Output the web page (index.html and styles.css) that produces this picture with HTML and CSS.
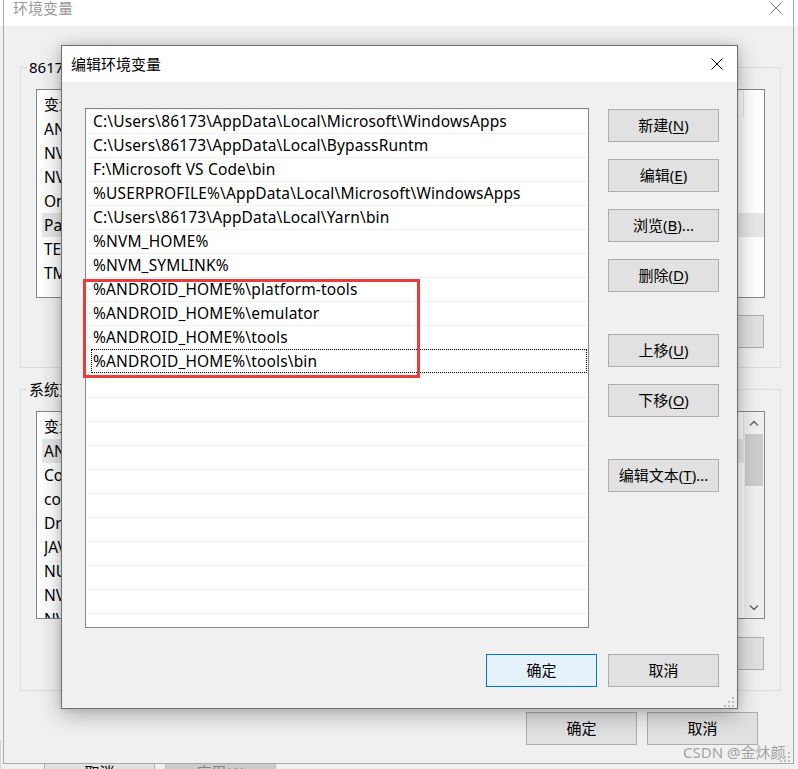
FILE: index.html
```html
<!DOCTYPE html>
<html lang="zh-CN">
<head>
<meta charset="utf-8">
<title>编辑环境变量</title>
<link rel="stylesheet" href="styles.css">
</head>
<body>
<div class="back-window">
  <div class="back-buttons">
    <span class="btn">取消</span>
    <span class="btn disabled">应用(A)</span>
  </div>
</div>

<section class="win env">
  <header class="win-title">
    <span class="win-caption">环境变量</span>
    <span class="win-close"><svg width="12" height="12" viewBox="0 0 12 12"><path d="M0.5 0.5L11.5 11.5M11.5 0.5L0.5 11.5" stroke="#777" stroke-width="1" fill="none"/></svg></span>
  </header>
  <div class="env-body">
    <div class="group">
      <span class="group-label">86173 的用户变量(<u>U</u>)</span>
      <div class="vlist v-user">
        <div class="vl-rows">
          <div class="vhead"><span class="c1">变量</span><span class="c2">值</span></div>
          <div class="vrow"><span class="c1">ANDROID_HOME</span><span class="c2">D:\Android\Sdk</span></div>
          <div class="vrow"><span class="c1">NVM_HOME</span><span class="c2">D:\nvm</span></div>
          <div class="vrow"><span class="c1">NVM_SYMLINK</span><span class="c2">D:\nodejs</span></div>
          <div class="vrow"><span class="c1">OneDrive</span><span class="c2">C:\Users\86173\OneDrive</span></div>
          <div class="vrow sel"><span class="c1">Path</span><span class="c2">C:\Users\86173\AppData\Local\Microsoft\WindowsApps;...</span></div>
          <div class="vrow"><span class="c1">TEMP</span><span class="c2">%USERPROFILE%\AppData\Local\Temp</span></div>
          <div class="vrow"><span class="c1">TMP</span><span class="c2">%USERPROFILE%\AppData\Local\Temp</span></div>
        </div>
      </div>
      <div class="group-btns">
        <span class="btn">新建(<u>N</u>)...</span>
        <span class="btn">编辑(<u>E</u>)...</span>
        <span class="btn">删除(<u>D</u>)</span>
      </div>
    </div>

    <div class="group group-sys">
      <span class="group-label">系统变量(<u>S</u>)</span>
      <div class="vlist v-sys">
        <div class="vl-rows">
          <div class="vhead"><span class="c1">变量</span><span class="c2">值</span></div>
          <div class="vrow sel"><span class="c1">ANDROID_HOME</span><span class="c2">D:\Android\Sdk</span></div>
          <div class="vrow"><span class="c1">ComSpec</span><span class="c2">C:\Windows\system32\cmd.exe</span></div>
          <div class="vrow"><span class="c1">configsetroot</span><span class="c2">C:\Windows\ConfigSetRoot</span></div>
          <div class="vrow"><span class="c1">DriverData</span><span class="c2">C:\Windows\System32\Drivers\DriverData</span></div>
          <div class="vrow"><span class="c1">JAVA_HOME</span><span class="c2">C:\Program Files\Java\jdk1.8.0</span></div>
          <div class="vrow"><span class="c1">NUMBER_OF_PROCESSORS</span><span class="c2">8</span></div>
          <div class="vrow"><span class="c1">NVM_HOME</span><span class="c2">D:\nvm</span></div>
          <div class="vrow"><span class="c1">NVM_SYMLINK</span><span class="c2">D:\nodejs</span></div>
        </div>
        <div class="scrollbar">
          <span class="sb-btn"><svg width="10" height="6" viewBox="0 0 10 6"><path d="M1 5.5L5 1.5L9 5.5" stroke="#606060" stroke-width="1.3" fill="none"/></svg></span>
          <span class="sb-track"><span class="sb-thumb"></span></span>
          <span class="sb-btn"><svg width="10" height="6" viewBox="0 0 10 6"><path d="M1 0.5L5 4.5L9 0.5" stroke="#606060" stroke-width="1.3" fill="none"/></svg></span>
        </div>
      </div>
      <div class="group-btns">
        <span class="btn">新建(<u>W</u>)...</span>
        <span class="btn">编辑(<u>I</u>)...</span>
        <span class="btn">删除(<u>L</u>)</span>
      </div>
    </div>

    <div class="env-foot">
      <span class="btn">确定</span>
      <span class="btn">取消</span>
    </div>
  </div>
  <svg class="grip" width="12" height="12" viewBox="0 0 12 12"><g fill="#bdbdbd"><rect x="9" y="1" width="2" height="2"/><rect x="5" y="5" width="2" height="2"/><rect x="9" y="5" width="2" height="2"/><rect x="1" y="9" width="2" height="2"/><rect x="5" y="9" width="2" height="2"/><rect x="9" y="9" width="2" height="2"/></g></svg>
</section>

<section class="win dlg">
  <header class="win-title">
    <span class="win-caption">编辑环境变量</span>
    <span class="win-close"><svg width="12" height="12" viewBox="0 0 12 12"><path d="M0.5 0.5L11.5 11.5M11.5 0.5L0.5 11.5" stroke="#000" stroke-width="1" fill="none"/></svg></span>
  </header>
  <div class="dlg-body">
    <div class="dlg-main">
      <div class="plist">
        <div class="prow">C:\Users\86173\AppData\Local\Microsoft\WindowsApps</div>
        <div class="prow">C:\Users\86173\AppData\Local\BypassRuntm</div>
        <div class="prow">F:\Microsoft VS Code\bin</div>
        <div class="prow">%USERPROFILE%\AppData\Local\Microsoft\WindowsApps</div>
        <div class="prow">C:\Users\86173\AppData\Local\Yarn\bin</div>
        <div class="prow">%NVM_HOME%</div>
        <div class="prow">%NVM_SYMLINK%</div>
        <div class="prow">%ANDROID_HOME%\platform-tools</div>
        <div class="prow">%ANDROID_HOME%\emulator</div>
        <div class="prow">%ANDROID_HOME%\tools</div>
        <div class="prow focus">%ANDROID_HOME%\tools\bin</div>
      </div>
      <div class="pbtns">
        <span class="btn">新建(<u>N</u>)</span>
        <span class="btn">编辑(<u>E</u>)</span>
        <span class="btn">浏览(<u>B</u>)...</span>
        <span class="btn">删除(<u>D</u>)</span>
        <span class="btn gap-lg">上移(<u>U</u>)</span>
        <span class="btn">下移(<u>O</u>)</span>
        <span class="btn gap-lg">编辑文本(<u>T</u>)...</span>
      </div>
    </div>
    <div class="dlg-foot">
      <span class="btn primary">确定</span>
      <span class="btn">取消</span>
    </div>
  </div>
  <div class="mark"></div>
  <svg class="grip" width="12" height="12" viewBox="0 0 12 12"><g fill="#bdbdbd"><rect x="9" y="1" width="2" height="2"/><rect x="5" y="5" width="2" height="2"/><rect x="9" y="5" width="2" height="2"/><rect x="1" y="9" width="2" height="2"/><rect x="5" y="9" width="2" height="2"/><rect x="9" y="9" width="2" height="2"/></g></svg>
</section>

<div class="watermark">CSDN @金炑颜</div>
</body>
</html>
```
FILE: styles.css
```css
html, body {
  margin: 0;
  padding: 0;
}

body {
  width: 798px;
  height: 769px;
  overflow: hidden;
  position: relative;
  background: linear-gradient(#ffffff 0 26px, #f0f0f0 26px);
  font-family: "Noto Sans", "Noto Sans CJK SC", sans-serif;
  font-size: 15px;
  color: #000;
}

u {
  text-decoration: underline;
  text-underline-offset: 2px;
}

/* generic button */
.btn {
  box-sizing: border-box;
  flex: none;
  width: 111px;
  height: 33px;
  border: 1px solid #adadad;
  background: #e1e1e1;
  display: flex;
  align-items: center;
  justify-content: center;
  line-height: 1;
  white-space: nowrap;
}

.btn.primary {
  background: #e5f1fb;
  border-color: #0078d7;
}

.btn.disabled {
  background: #cccccc;
  border-color: #bfbfbf;
  color: #838383;
}

/* window behind everything (bottom strip) */
.back-window {
  position: absolute;
  left: 0;
  top: 740px;
  width: 798px;
  height: 60px;
  background: #f0f0f0;
  border-left: 1px solid #d4d4d4;
}

.back-buttons {
  display: flex;
  gap: 10px;
  padding: 16px 0 0 43px;
}

/* windows */
.win {
  position: absolute;
  box-sizing: border-box;
  background: #f0f0f0;
  display: flex;
  flex-direction: column;
}

.win-title {
  flex: none;
  background: #ffffff;
  display: flex;
  justify-content: space-between;
}

.win-close {
  display: flex;
  align-items: center;
  justify-content: center;
}

.grip {
  position: absolute;
  right: 2px;
  bottom: 0;
}

/* background "环境变量" window */
.env {
  left: 3px;
  top: 0;
  width: 791px;
  height: 764px;
  border: 1px solid #a9a9a9;
  border-top: 0;
}

.env .win-title {
  height: 26px;
}

.env .win-caption {
  padding-left: 9px;
  line-height: 16px;
  color: #9a9a9a;
}

.env .win-close {
  width: 34px;
  height: 16px;
}

.env-body {
  padding: 41px 12px 0 16px;
  display: flex;
  flex-direction: column;
}

.group {
  border: 1px solid #dcdcdc;
  padding: 0 15px 19px;
  display: flex;
  flex-direction: column;
}

.group-sys {
  margin-top: 21px;
  padding-bottom: 20px;
}

.group-label {
  align-self: flex-start;
  margin: -11px 0 0 -9px;
  padding: 0 2px;
  line-height: 20px;
  background: #f0f0f0;
}

.vlist {
  box-sizing: border-box;
  margin-top: 12px;
  border: 1px solid #828790;
  background: #ffffff;
  display: flex;
  overflow: hidden;
}

.v-user {
  height: 209px;
}

.v-sys {
  height: 208px;
}

.vl-rows {
  flex: 1;
  overflow: hidden;
}

.vhead {
  height: 27px;
  line-height: 29px;
  display: flex;
  padding-left: 7px;
  white-space: nowrap;
}

.vhead .c2 {
  flex: 1;
  border-right: 1px solid #e5e5e5;
  margin-right: 20px;
}

.v-sys .vhead .c2 {
  margin-right: 0;
}

.vrow {
  height: 24px;
  line-height: 24px;
  margin-left: 5px;
  padding-left: 2px;
  display: flex;
  white-space: nowrap;
  font-size: 15.5px;
}

.c1 {
  width: 200px;
  flex: none;
  overflow: hidden;
}

.c2 {
  overflow: hidden;
}

.vrow.sel {
  background: #e8e8e8;
}

.scrollbar {
  width: 20px;
  flex: none;
  background: #f0f0f0;
  display: flex;
  flex-direction: column;
}

.sb-btn {
  height: 22px;
  flex: none;
  display: flex;
  align-items: center;
  justify-content: center;
}

.sb-btn:last-child {
  height: 21px;
}

.sb-track {
  flex: 1;
  display: flex;
  flex-direction: column;
}

.sb-thumb {
  height: 52px;
  margin: 0 1px;
  background: #cdcdcd;
}

.group-btns {
  display: flex;
  justify-content: flex-end;
  gap: 10px;
  margin: 18px 1px 0 0;
}

.group:first-child .group-btns {
  margin-top: 17px;
}

.env-foot {
  display: flex;
  justify-content: flex-end;
  gap: 10px;
  margin: 21px 23px 0 0;
}

/* "编辑环境变量" dialog */
.dlg {
  left: 61px;
  top: 45px;
  width: 677px;
  height: 664px;
  border: 1px solid #6f6f6f;
  box-shadow: 0 6px 22px rgba(0, 0, 0, 0.28), 0 0 8px rgba(0, 0, 0, 0.12);
}

.dlg .win-title {
  height: 36px;
  align-items: center;
}

.dlg .win-caption {
  padding-left: 9px;
  line-height: 20px;
}

.dlg .win-close {
  width: 40px;
  height: 36px;
}

.dlg-body {
  padding: 26px 18px 0 23px;
  display: flex;
  flex-direction: column;
}

.dlg-main {
  display: flex;
  gap: 19px;
}

.plist {
  box-sizing: border-box;
  width: 504px;
  height: 520px;
  border: 1px solid #828790;
  background: repeating-linear-gradient(to bottom, #f0f0f0 0 1px, #ffffff 1px 24px);
  overflow: hidden;
}

.prow {
  height: 24px;
  line-height: 25px;
  padding-left: 7px;
  white-space: nowrap;
  font-size: 15.5px;
  letter-spacing: 0.15px;
}

.prow.focus {
  box-sizing: border-box;
  margin: 0 1px 0 5px;
  padding-left: 1px;
  border: 1px dotted #000;
  line-height: 23px;
}

.pbtns {
  display: flex;
  flex-direction: column;
  gap: 17px;
  padding-top: 1px;
}

.pbtns .gap-lg {
  margin-top: 25px;
}

.dlg-foot {
  display: flex;
  justify-content: flex-end;
  gap: 11px;
  margin-top: 26px;
}

/* red annotation rectangle */
.mark {
  position: absolute;
  left: 21px;
  top: 233px;
  width: 337px;
  height: 99px;
  box-sizing: border-box;
  border: 3px solid #ee3a3a;
}

.watermark {
  position: absolute;
  left: 683px;
  top: 742px;
  line-height: 20px;
  font-size: 15px;
  color: rgba(140, 140, 140, 0.8);
  white-space: nowrap;
}
```
